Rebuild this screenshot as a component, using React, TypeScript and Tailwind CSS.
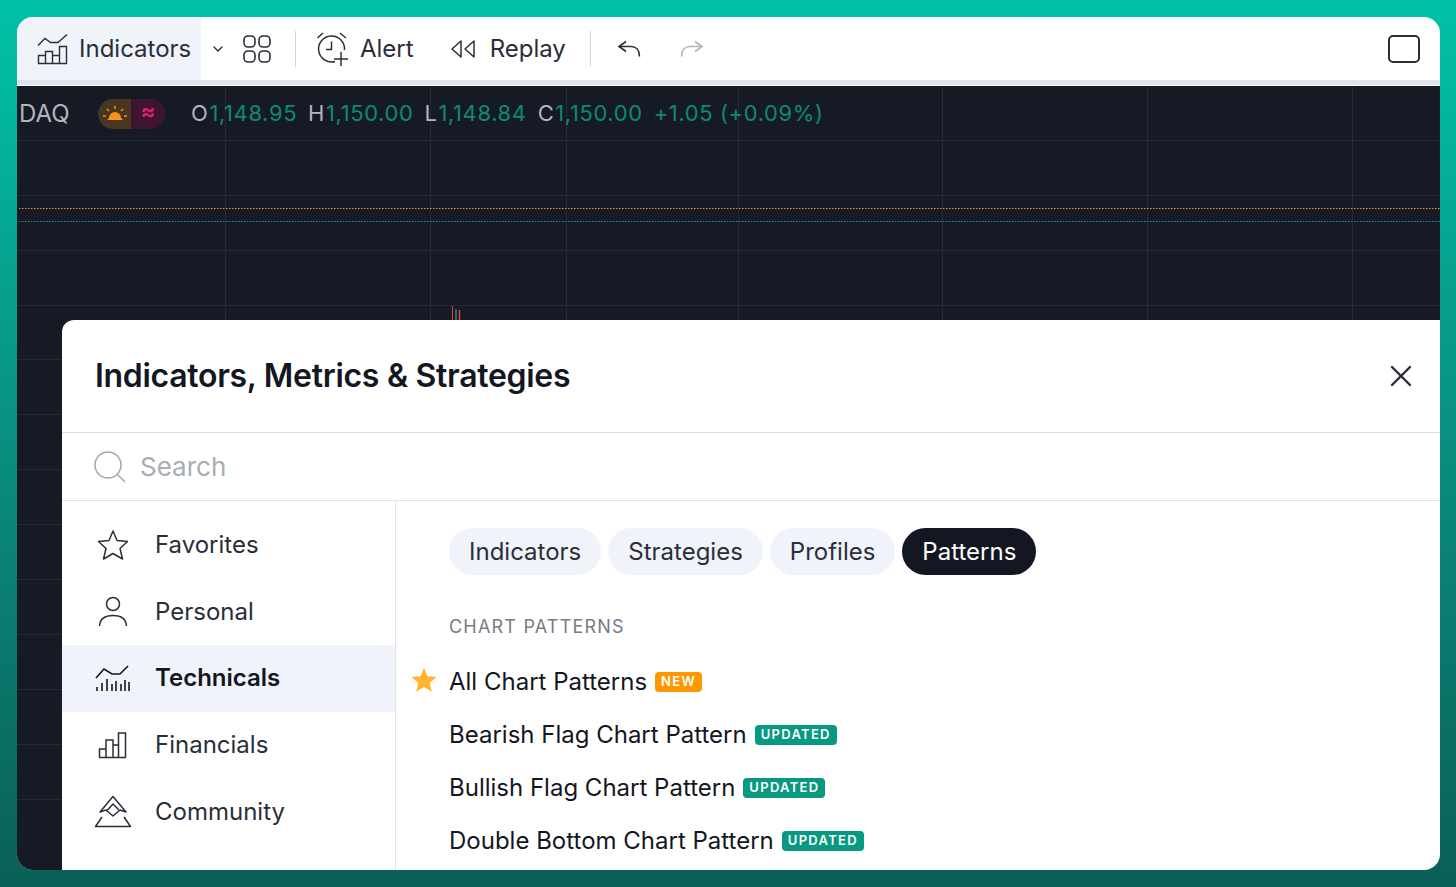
import React from 'react';
import { ChevronDown, X } from 'lucide-react';

const SANS = 'font-[Inter,"Liberation_Sans",sans-serif]';

const IndicatorsIcon = () => (
  <svg width="32" height="32" viewBox="0 0 32 32" fill="none" stroke="#2a2e39" strokeWidth="1.4" className="shrink-0">
    <path d="M1 12.5 L8 5.5 L13.5 9.5 L21 9.5 L30 1.5" />
    <path d="M1.5 30.5 V22.5 H8.5 V30.5 M8.5 30.5 V18.5 H15.5 V30.5 M15.5 30.5 V22.5 H22.5 V30.5 M22.5 30.5 V13.5 H29.5 V30.5 M1 30.5 H30" />
  </svg>
);

const LayoutIcon = () => (
  <svg width="28" height="28" viewBox="0 0 28 28" fill="none" stroke="#2a2e39" strokeWidth="1.6">
    <rect x="1" y="1" width="11" height="11" rx="4" />
    <rect x="16" y="1" width="11" height="11" rx="4" />
    <rect x="1" y="16" width="11" height="11" rx="4" />
    <rect x="16" y="16" width="11" height="11" rx="4" />
  </svg>
);

const AlertIcon = () => (
  <svg width="34" height="36" viewBox="0 0 34 36" fill="none" stroke="#2a2e39" strokeWidth="1.5">
    <path d="M19 30.5 A13 13 0 1 1 28.5 19" />
    <path d="M15.5 10.5 V18.5 H10" />
    <path d="M1.5 7 L7 2 M24 2 L30 7" />
    <path d="M25 21 V35 M18 28 H32" />
  </svg>
);

const ReplayIcon = () => (
  <svg width="26" height="20" viewBox="0 0 26 20" fill="none" stroke="#2a2e39" strokeWidth="1.5" strokeLinejoin="round">
    <path d="M11 2 L2 10 L11 18 Z" />
    <path d="M24 2 L15 10 L24 18 Z" />
  </svg>
);

const UndoIcon = ({ color }: { color: string }) => (
  <svg width="24" height="18" viewBox="0 0 24 18" fill="none" stroke={color} strokeWidth="1.6">
    <path d="M9 1.5 L2 6.5 L9 11.5" />
    <path d="M2 6.5 H14 C19 6.5 22.5 10 22.5 16.5" />
  </svg>
);

const StarIcon = () => (
  <svg width="32" height="32" viewBox="0 0 32 32" fill="none" stroke="#2a2e39" strokeWidth="1.5" strokeLinejoin="round">
    <path d="M16 2 L20 11.5 L30.5 12.5 L23 19.5 L25.5 30 L16 24.5 L6.5 30 L9 19.5 L1.5 12.5 L12 11.5 Z" />
  </svg>
);

const PersonIcon = () => (
  <svg width="32" height="32" viewBox="0 0 32 32" fill="none" stroke="#2a2e39" strokeWidth="1.5">
    <circle cx="16" cy="8" r="6.5" />
    <path d="M2.5 30 C3 23 8 19.5 16 19.5 C24 19.5 29 23 29.5 30" />
  </svg>
);

const TechnicalsIcon = () => (
  <svg width="36" height="28" viewBox="0 0 36 28" fill="none" stroke="#131722" strokeWidth="1.6">
    <path d="M1 14 L9 5 L17 10 L25 10 L33 2" />
    <path d="M2 27 V23 M7 27 V19 M12 27 V15 M17 27 V20 M21 27 V17 M26 27 V20 M30 27 V16 M34 27 V18" />
  </svg>
);

const FinancialsIcon = () => (
  <svg width="30" height="28" viewBox="0 0 30 28" fill="none" stroke="#2a2e39" strokeWidth="1.5">
    <path d="M1.5 26.5 V18 H8 V26.5 M8 26.5 V9 H15 V26.5 M15 26.5 V14 H20.5 V26.5 M20.5 26.5 V2 H27.5 V26.5 M1 26.5 H28" />
  </svg>
);

const CommunityIcon = () => (
  <svg width="38" height="34" viewBox="0 0 38 34" fill="none" stroke="#2a2e39" strokeWidth="1.5" strokeLinejoin="round">
    <path d="M19 1.5 L6 17 L12 15 L19 21 L26 15 L32 17 Z" />
    <path d="M8 22 L1.5 31.5 H36.5 L30 22" />
    <path d="M13 15.5 L19 9 L25 15" />
  </svg>
);

const SearchIcon = () => (
  <svg width="32" height="32" viewBox="0 0 32 32" fill="none" stroke="#a3a6af" strokeWidth="1.5">
    <circle cx="14" cy="14" r="13" />
    <path d="M23.5 23.5 L31 31" />
  </svg>
);

const ChartGrid = () => (
  <svg className="absolute inset-0 h-full w-full" fill="none">
    {[54, 109, 164, 219, 273, 328, 383, 438, 493, 548, 603, 658, 713].map((y) => (
      <line key={y} x1="0" x2="1423" y1={y + 0.5} y2={y + 0.5} stroke="#262a35" />
    ))}
    {[208, 413, 549, 721, 925, 1130, 1335].map((x) => (
      <line key={x} x1={x + 0.5} x2={x + 0.5} y1="0" y2="767" stroke="#262a35" />
    ))}
    <line x1="2" x2="1423" y1="122.5" y2="122.5" stroke="#f7931a" strokeDasharray="1.5 1.5" />
    <line x1="2" x2="1423" y1="135.5" y2="135.5" stroke="#1a9a8a" strokeDasharray="1.5 1.5" />
    <path d="M435.5 220 V234" stroke="#f23645" />
    <path d="M439 223 V234" stroke="#089981" strokeWidth="1.5" />
    <path d="M442.5 224 V234" stroke="#f23645" strokeWidth="1.5" />
  </svg>
);

const Ohlc = ({ label, value }: { label: string; value: string }) => (
  <span className="flex">
    <span className="text-[#b2b5be]">{label}</span>
    <span className="ml-px text-[#0c8a76]">{value}</span>
  </span>
);

const SIDEBAR = [
  { label: 'Favorites', icon: <StarIcon />, iconClass: 'scale-100' },
  { label: 'Personal', icon: <PersonIcon />, iconClass: 'scale-100' },
  { label: 'Technicals', icon: <TechnicalsIcon />, active: true, iconClass: 'scale-100' },
  { label: 'Financials', icon: <FinancialsIcon />, iconClass: 'scale-100' },
  { label: 'Community', icon: <CommunityIcon />, iconClass: 'scale-100' },
];

const PATTERNS = [
  { name: 'Bearish Flag Chart Pattern', h: 'h-[53px]' },
  { name: 'Bullish Flag Chart Pattern', h: 'h-[53px]' },
  { name: 'Double Bottom Chart Pattern', h: 'h-[53px]' },
];

const Updated = () => (
  <span className="ml-2 flex h-5 items-center rounded-[4px] bg-[#089981] px-1.5 text-[13px] font-semibold tracking-[1.3px] text-white">
    UPDATED
  </span>
);

const App: React.FC = () => {
  return (
    <div className={`h-[887px] w-[1456px] overflow-hidden bg-gradient-to-b from-[#00c2a8] to-[#0a5f58] pt-[17px] pr-4 pb-[17px] pl-[17px] ${SANS}`}>
      <div className="flex h-full flex-col overflow-hidden rounded-2xl bg-white">
        {/* toolbar */}
        <div className="flex h-[63px] shrink-0 items-center text-[24px] text-[#2a2e39]">
          <div className="flex h-full w-[184px] items-center gap-2.5 bg-[#f0f3fa] pl-5">
            <IndicatorsIcon />
            <span>Indicators</span>
          </div>
          <ChevronDown className="ml-[9px] text-[#2a2e39]" size={16} />
          <div className="ml-[17px]"><LayoutIcon /></div>
          <div className="ml-6 h-9 w-px bg-[#d6d8df]" />
          <div className="ml-5"><AlertIcon /></div>
          <span className="ml-2.5">Alert</span>
          <div className="ml-9"><ReplayIcon /></div>
          <span className="ml-3.5">Replay</span>
          <div className="ml-6 h-9 w-px bg-[#d6d8df]" />
          <div className="ml-[26px]"><UndoIcon color="#2a2e39" /></div>
          <div className="ml-[39px] -scale-x-100"><UndoIcon color="#b2b5be" /></div>
          <div className="mr-5 ml-auto h-[28px] w-[32px] rounded-[5px] border-2 border-[#2a2e39]" />
        </div>
        <div className="h-1.5 shrink-0 border-b border-white bg-[#e0e3eb]" />

        {/* chart */}
        <div className="relative min-h-0 flex-1 bg-[#161a25]">
          <ChartGrid />
          <div className="relative flex h-[55px] items-center pl-0.5 text-[24px] text-[#b2b5be]">
            <span className="w-[79px]">DAQ</span>
            <div className="flex h-[30px] w-[67px] overflow-hidden rounded-full">
              <div className="flex w-[33px] items-center justify-center bg-[#4a3520]">
                <svg width="24" height="16" viewBox="0 0 24 16" fill="#f7931a">
                  <path d="M6 12 A6 6 0 0 1 18 12 L20 14 H4 Z" />
                  <path d="M12 0 V3 M4 3 L6 5 M20 3 L18 5 M0 10 H3 M21 10 H24" stroke="#f7931a" strokeWidth="1.5" />
                </svg>
              </div>
              <div className="flex flex-1 items-center justify-center bg-[#3d1530] pb-1 text-[22px] font-semibold text-[#e91e63]">≈</div>
            </div>
            <div className="ml-[26px] flex gap-[11px] text-[22px] tracking-[0.6px]">
              <Ohlc label="O" value="1,148.95" />
              <Ohlc label="H" value="1,150.00" />
              <Ohlc label="L" value="1,148.84" />
              <Ohlc label="C" value="1,150.00" />
              <span className="text-[#0c8a76]">+1.05 (+0.09%)</span>
            </div>
          </div>

          {/* dialog */}
          <div className="absolute top-[234px] right-0 bottom-0 left-[45px] flex flex-col rounded-tl-xl bg-white text-[#131722]">
            <div className="flex h-[113px] shrink-0 items-center justify-between border-b border-[#d8dbe4] pr-[21px] pl-[33px]">
              <span className="text-[32px] font-semibold tracking-[-0.3px]">Indicators, Metrics &amp; Strategies</span>
              <X size={36} strokeWidth={1.6} className="text-[#2a2e39]" />
            </div>
            <div className="flex h-[68px] shrink-0 items-center gap-[14px] border-b border-[#e0e3eb] pl-[32px] text-[26px] text-[#a9acb5]">
              <SearchIcon />
              <span>Search</span>
            </div>
            <div className="flex min-h-0 flex-1">
              <div className="w-[334px] shrink-0 border-r border-[#e0e3eb] pt-[11px]">
                {SIDEBAR.map((item) => (
                  <div
                    key={item.label}
                    className={`flex h-[66.6px] items-center text-[24px] ${item.active ? 'bg-[#f0f3fa] font-semibold text-[#131722]' : 'text-[#2a2e39]'}`}
                  >
                    <div className="flex w-[93px] justify-center pl-2">{item.icon}</div>
                    <span>{item.label}</span>
                  </div>
                ))}
              </div>
              <div className="min-w-0 flex-1 pt-[27px] pl-[53px] text-[24px]">
                <div className="flex gap-[7px]">
                  <span className="flex h-[47px] items-center rounded-full bg-[#f0f3fa] px-5 text-[#2a2e39]">Indicators</span>
                  <span className="flex h-[47px] items-center rounded-full bg-[#f0f3fa] px-5 text-[#2a2e39]">Strategies</span>
                  <span className="flex h-[47px] items-center rounded-full bg-[#f0f3fa] px-5 text-[#2a2e39]">Profiles</span>
                  <span className="flex h-[47px] items-center rounded-full bg-[#131722] px-5 text-white">Patterns</span>
                </div>
                <div className="mt-[38px] text-[18px] tracking-[1.2px] text-[#787b86]">CHART PATTERNS</div>
                <div className="relative mt-[15px] flex h-[53px] items-center">
                  <svg className="absolute top-3 -left-[38px]" width="26" height="26" viewBox="0 0 24 24" fill="#ffb52e">
                    <path d="M12 1 L15.3 8.6 L23.5 9.3 L17.3 14.7 L19.2 22.8 L12 18.5 L4.8 22.8 L6.7 14.7 L0.5 9.3 L8.7 8.6 Z" />
                  </svg>
                  <span>All Chart Patterns</span>
                  <span className="ml-2 flex h-5 items-center rounded-[4px] bg-[#ff9800] px-1.5 text-[13px] font-semibold tracking-[1.3px] text-white">NEW</span>
                </div>
                {PATTERNS.map((p) => (
                  <div key={p.name} className={`flex items-center ${p.h}`}>
                    <span>{p.name}</span>
                    <Updated />
                  </div>
                ))}
              </div>
            </div>
          </div>
        </div>
      </div>
    </div>
  );
};

export default App;
